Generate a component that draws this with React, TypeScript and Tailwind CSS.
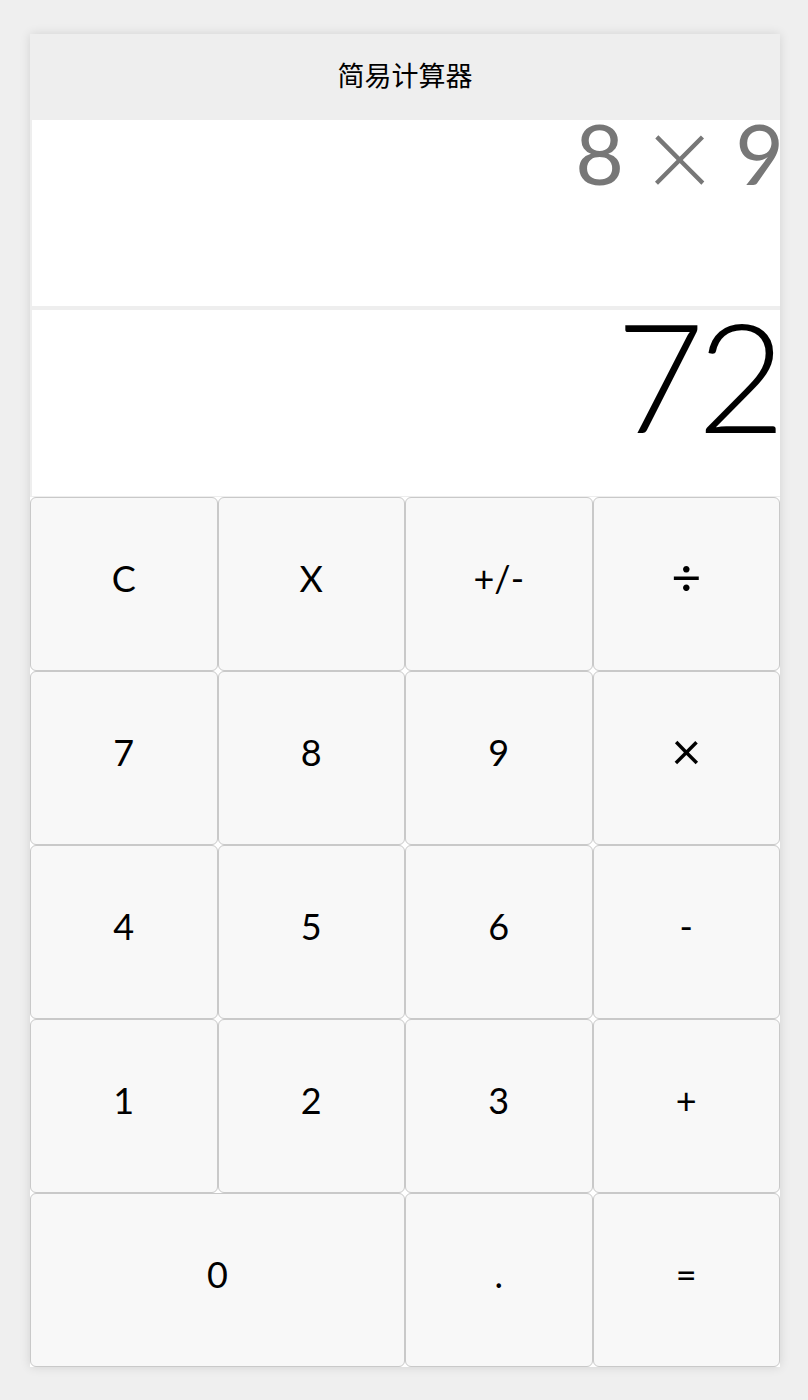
import React from "react";

type Key = { label: string; wide?: boolean; big?: boolean };

const keys: Key[] = [
  { label: "C" },
  { label: "X" },
  { label: "+/-" },
  { label: "÷", big: true },
  { label: "7" },
  { label: "8" },
  { label: "9" },
  { label: "×", big: true },
  { label: "4" },
  { label: "5" },
  { label: "6" },
  { label: "-" },
  { label: "1" },
  { label: "2" },
  { label: "3" },
  { label: "+" },
  { label: "0", wide: true },
  { label: "." },
  { label: "=" },
];

export default function App() {
  return (
    <div
      className="min-h-[1400px] bg-[#efefef] pt-[34px]"
      style={{ fontFamily: "Lato, 'Noto Sans', 'Noto Sans CJK SC', sans-serif" }}
    >
      <div className="mx-[30px] w-[750px] bg-white shadow-[0_0_10px_rgba(0,0,0,0.12)]">
        {/* Title */}
        <div className="flex h-[86px] items-center justify-center bg-[#eeeeee] pb-[4px] text-[27px] text-black">
          <span style={{ fontFamily: "'Noto Sans CJK SC', sans-serif" }}>简易计算器</span>
        </div>

        {/* Displays */}
        <div className="flex flex-col gap-[4px] bg-[#eeeeee] pb-[1px] pl-[2px]">
          <div className="h-[186px] overflow-hidden bg-white">
            <div className="mr-[-4px] mt-[-9px] flex items-start justify-end gap-[22px] text-[84px] font-normal leading-none text-[#777777]">
              <span>8</span>
              <span className="mt-[-14px] text-[116px] font-light leading-none">×</span>
              <span>9</span>
            </div>
          </div>
          <div className="h-[186px] overflow-hidden bg-white text-right">
            <div className="mr-[2px] mt-[-12px] text-[153px] font-light leading-none tracking-[-0.05em] text-black">
              72
            </div>
          </div>
        </div>

        {/* Keypad */}
        <div className="grid grid-cols-4">
          {keys.map((k) => (
            <button
              key={k.label}
              className={`flex h-[174px] items-center justify-center rounded-[6px] border border-[#c9c9c9] bg-[#f8f8f8] text-black ${
                k.wide ? "col-span-2" : ""
              } ${k.big ? "pb-[16px] text-[52px] leading-none" : "pb-[12px] text-[36px]"}`}
            >
              {k.label}
            </button>
          ))}
        </div>
      </div>
    </div>
  );
}
